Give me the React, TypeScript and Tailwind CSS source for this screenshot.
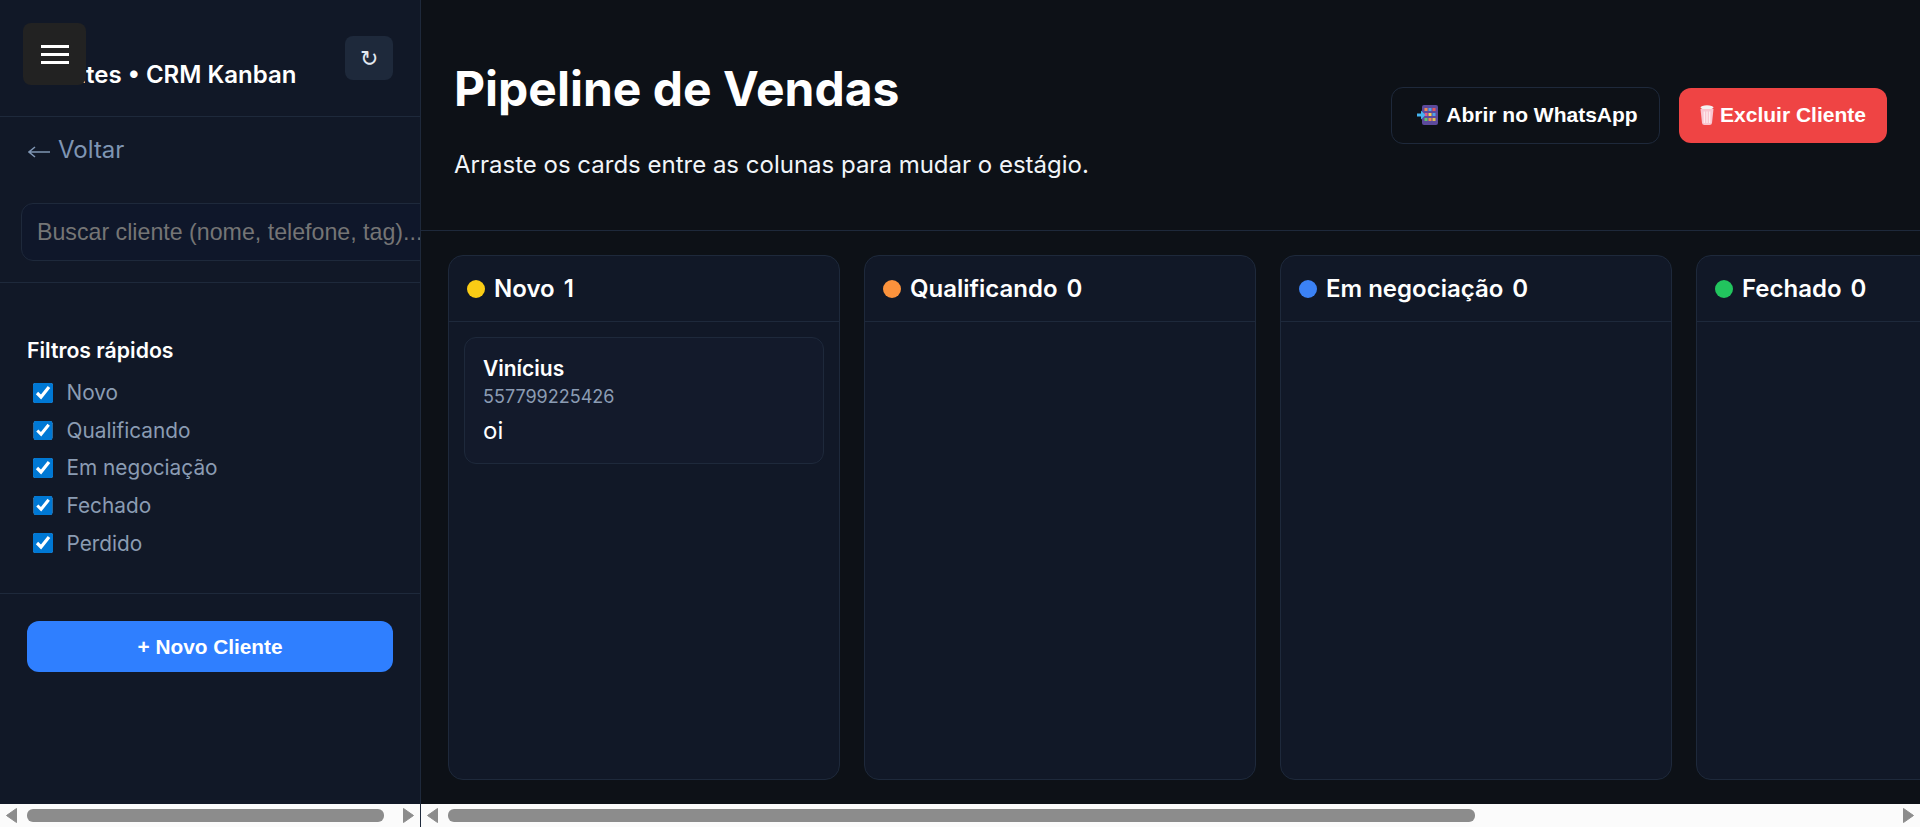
import { useState } from "react";

const stages = [
  { name: "Novo", count: 1, dot: "bg-[#facc15]" },
  { name: "Qualificando", count: 0, dot: "bg-[#fb923c]" },
  { name: "Em negociação", count: 0, dot: "bg-[#3b82f6]" },
  { name: "Fechado", count: 0, dot: "bg-[#22c55e]" },
];

const filters = ["Novo", "Qualificando", "Em negociação", "Fechado", "Perdido"];

const Arrow = ({ right = false }: { right?: boolean }) => (
  <svg width="11" height="15" viewBox="0 0 11 15" className="shrink-0">
    <path
      d={right ? "M0.5 0.5 L10.5 7.5 L0.5 14.5 Z" : "M10.5 0.5 L0.5 7.5 L10.5 14.5 Z"}
      fill="#8c8c8c"
      stroke="#8c8c8c"
      strokeLinejoin="round"
    />
  </svg>
);

const Scrollbar = ({ className, thumb }: { className: string; thumb: string }) => (
  <div className={`flex h-[23px] shrink-0 items-center bg-[#fbfbfb] ${className}`}>
    <Arrow />
    <div className={`h-[13px] rounded-[6px] bg-[#8c8c8c] ${thumb}`} />
    <div className="flex-1" />
    <Arrow right />
  </div>
);

const PhoneIcon = () => (
  <svg width="21" height="20" viewBox="0 0 21 20" className="shrink-0">
    <rect x="5" y="0" width="16" height="20" rx="2" fill="#5c4a9c" />
    <rect x="7.5" y="3" width="3" height="3" fill="#ef8b4f" />
    <rect x="11.5" y="3" width="3" height="3" fill="#4fa3e8" />
    <rect x="15.5" y="3" width="3" height="3" fill="#e55a5a" />
    <rect x="7.5" y="8" width="3" height="3" fill="#e55a8a" />
    <rect x="11.5" y="8" width="3" height="3" fill="#f5d04f" />
    <rect x="15.5" y="8" width="3" height="3" fill="#4fa3e8" />
    <rect x="7.5" y="13" width="3" height="3" fill="#5fc46a" />
    <rect x="11.5" y="13" width="3" height="3" fill="#ef8b4f" />
    <rect x="15.5" y="13" width="3" height="3" fill="#e5c04f" />
    <path d="M0 8.500h4V5.500l4.500 4.500-4.500 4.500v-3H0z" fill="#45b4f0" />
  </svg>
);

const TrashIcon = () => (
  <svg width="14" height="20" viewBox="0 0 14 20" className="shrink-0">
    <ellipse cx="7" cy="2.500" rx="6.500" ry="2.200" fill="#f3f3f3" />
    <path d="M0.500 4 L2 18 Q2.200 20 4.500 20 H9.500 Q11.800 20 12 18 L13.500 4 Z" fill="#f9c6d0" />
    <path d="M4.300 6.500V18M7 6.500V18M9.700 6.500V18" stroke="#fdeef1" strokeWidth="1.200" />
  </svg>
);

export default function App() {
  const [checked, setChecked] = useState(filters);

  const toggle = (name: string) => {
    setChecked(checked.includes(name) ? checked.filter((f) => f !== name) : [...checked, name]);
  };

  return (
    <div className="relative flex h-[827px] w-[1920px] overflow-hidden bg-[#0d1117] font-['Inter',sans-serif] text-white">
      {/* menu flutuante */}
      <button className="absolute left-[23px] top-[23px] z-10 flex h-[62px] w-[63px] flex-col items-center justify-center gap-[5px] rounded-[8px] bg-[#222222]">
        <span className="h-[3px] w-[28px] bg-white" />
        <span className="h-[3px] w-[28px] bg-white" />
        <span className="h-[3px] w-[28px] bg-white" />
      </button>

      <aside className="flex w-[421px] shrink-0 flex-col border-r border-[#1e293b] bg-[#111827]">
        <div className="flex-1 overflow-hidden">
          <div className="flex h-[117px] items-center justify-between border-b border-[#1e293b] pl-[27px] pr-[27px]">
            <h2 className="mt-[34px] text-[24px] font-semibold">Clientes • CRM Kanban</h2>
            <button className="flex h-[44px] w-[48px] items-center justify-center rounded-[8px] bg-[#1e293b] font-['Liberation_Sans',sans-serif] text-[22px] text-[#e2e8f0]">
              ↻
            </button>
          </div>

          <a className="mt-[16px] flex items-center pl-[28px] text-[24px] leading-[34px] text-[#7f95b3]">
            <svg width="22" height="12" viewBox="0 0 22 12" className="mr-[8px] mt-[4px] shrink-0">
              <path d="M22 6H1M7 1 1 6l6 5" fill="none" stroke="#7f95b3" strokeWidth="1.500" />
            </svg>
            Voltar
          </a>

          <div className="w-[421px] overflow-hidden border-b border-[#1e293b] pb-[21px] pl-[21px] pt-[36px]">
            <input
              placeholder="Buscar cliente (nome, telefone, tag)..."
              className="h-[58px] w-[480px] rounded-[12px] border border-[#1e293b] bg-[#0f172a] pl-[15px] font-['Liberation_Sans',sans-serif] text-[23.200px] text-white outline-none placeholder:text-[#757575]"
            />
          </div>

          <div className="border-b border-[#1e293b] pb-[31.500px] pl-[27px] pt-[54px]">
            <h3 className="text-[21.250px] font-semibold leading-[26px]">Filtros rápidos</h3>
            <div className="mt-[11px] flex flex-col">
              {filters.map((name) => (
                <label key={name} className="flex h-[37.600px] items-center pl-[6px] text-[20.800px] text-[#8b9cb3]">
                  <input
                    type="checkbox"
                    checked={checked.includes(name)}
                    onChange={() => toggle(name)}
                    className="m-0 h-[19.5px] w-[19.5px] accent-[#0078d4]"
                  />
                  <span className="ml-[14px]">{name}</span>
                </label>
              ))}
            </div>
          </div>

          <div className="px-[27px] pt-[27px]">
            <button className="h-[51px] w-full rounded-[12px] bg-[#2f7fff] font-['Liberation_Sans',sans-serif] text-[20.800px] font-bold">
              + Novo Cliente
            </button>
          </div>
        </div>
        <Scrollbar className="pl-[6px] pr-[6px]" thumb="ml-[10px] w-[357px]" />
      </aside>

      <main className="flex min-w-0 flex-1 flex-col">
        <div className="flex-1 overflow-hidden">
          <header className="flex h-[231px] items-center justify-between border-b border-[#1e293b] pl-[33px] pr-[33px]">
            <div className="pt-[10px]">
              <h1 className="text-[48px] font-bold leading-[60px]">Pipeline de Vendas</h1>
              <p className="mt-[29px] text-[24px] leading-[34px] text-[#f1f5f9]">
                Arraste os cards entre as colunas para mudar o estágio.
              </p>
            </div>
            <div className="flex items-center gap-[19px] font-['Liberation_Sans',sans-serif] text-[21px] font-bold">
              <button className="flex h-[57px] w-[269px] items-center justify-center gap-[8px] rounded-[12px] border border-[#1e293b] pl-[4px]">
                <PhoneIcon />
                Abrir no WhatsApp
              </button>
              <button className="flex h-[55px] w-[208px] items-center justify-center gap-[6px] rounded-[12px] bg-[#ef4444]">
                <TrashIcon />
                Excluir Cliente
              </button>
            </div>
          </header>

          <div className="flex gap-[24px] pl-[27px] pt-[24px]">
            {stages.map((stage) => (
              <section
                key={stage.name}
                className="h-[525px] w-[392px] shrink-0 rounded-[15px] border border-[#1e293b] bg-[#111827]"
              >
                <div className="flex h-[66px] items-center gap-[9px] border-b border-[#1e293b] pl-[18px]">
                  <span className={`h-[18px] w-[18px] rounded-full ${stage.dot}`} />
                  <span className="text-[24px] font-semibold">{stage.name}</span>
                  <span className="text-[24px] font-semibold">{stage.count}</span>
                </div>
                {stage.count > 0 && (
                  <div className="mx-[15px] mt-[15px] h-[127px] rounded-[12px] border border-[#1e293b] bg-[#131a2b] pl-[18px] pt-[17px]">
                    <p className="text-[21px] font-semibold leading-[28px]">Vinícius</p>
                    <p className="mt-[2px] text-[18px] leading-[24px] text-[#8b9cb3]">557799225426</p>
                    <p className="mt-[6px] text-[24px] leading-[32px]">oi</p>
                  </div>
                )}
              </section>
            ))}
          </div>
        </div>
        <Scrollbar className="pl-[6px] pr-[6px]" thumb="ml-[10px] w-[1027px]" />
      </main>
    </div>
  );
}
